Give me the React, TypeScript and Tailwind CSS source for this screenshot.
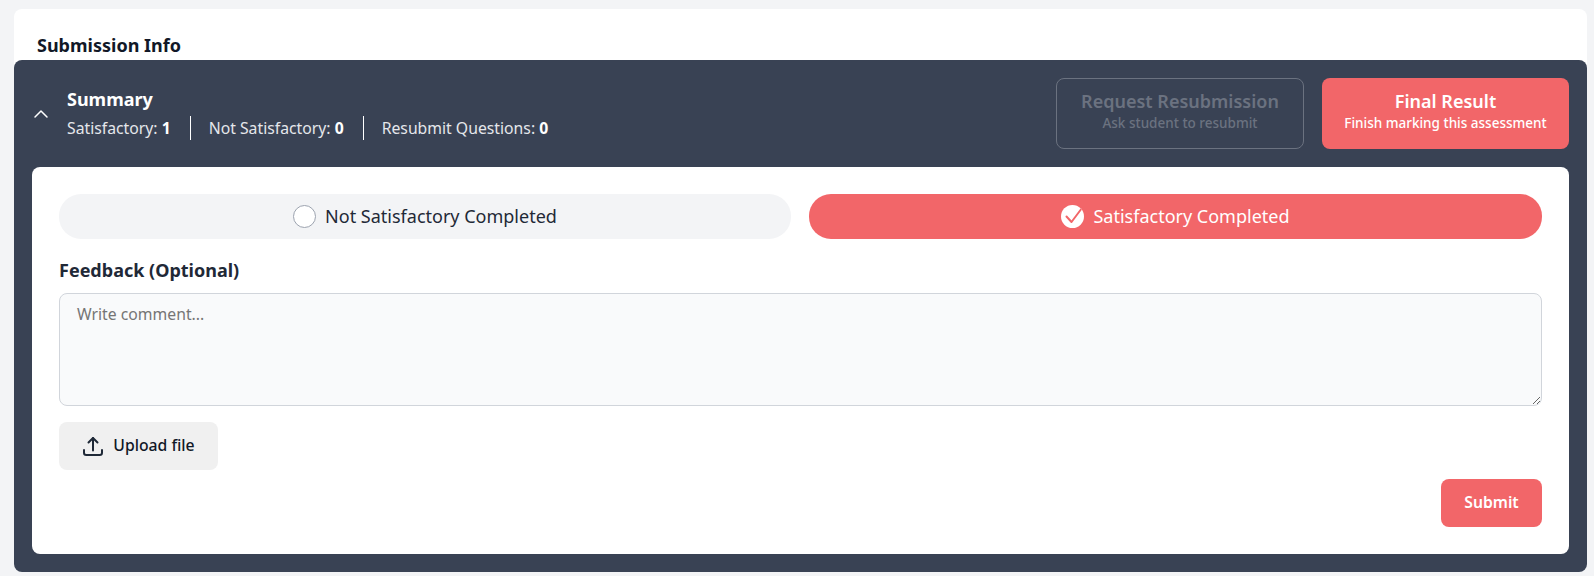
import { ChevronUp } from 'lucide-react'

const stats = [
  { label: 'Satisfactory', value: 1 },
  { label: 'Not Satisfactory', value: 0 },
  { label: 'Resubmit Questions', value: 0 },
]

function UploadIcon() {
  return (
    <svg width="22" height="22" viewBox="0 0 22 22" fill="none" stroke="#1f2937" strokeWidth="2" strokeLinecap="round" strokeLinejoin="round">
      <path d="M2 15v2.700a2.300 2.300 0 0 0 2.300 2.300h13.400a2.300 2.300 0 0 0 2.300-2.300V15" />
      <path d="M11 15.500V3" />
      <path d="M6.500 7.500 11 3l4.500 4.500" />
    </svg>
  )
}

export default function App() {
  return (
    <div className="h-[576px] overflow-hidden bg-[#f3f4f6] pt-[9px] pl-[14px] pr-[7px] font-['Noto_Sans',sans-serif]">
      {/* Submission info card */}
      <div className="h-[60px] rounded-t-lg bg-white pl-[23px] pt-[23px]">
        <h2 className="text-[18px] leading-[26px] font-bold text-[#111827]">Submission Info</h2>
      </div>

      {/* Summary panel */}
      <div className="relative mt-[-9px] h-[512px] rounded-lg bg-[#394254] px-[18px] pt-[18px]">
        <div className="flex h-[71px] items-center justify-between">
          <div className="flex items-center">
            <ChevronUp className="ml-[-3px] h-[24px] w-[24px] text-white" strokeWidth={1.5} />
            <div className="ml-[14px] mt-[-1px]">
              <div className="text-[18px] leading-[24px] font-bold text-white">Summary</div>
              <div className="mt-[5px] flex items-center text-[15.75px] leading-[24px] text-[#e5e7eb]">
                {stats.map((s, i) => (
                  <div key={s.label} className={i < 2 ? 'mr-[18px] border-r border-white pr-[19px]' : ''}>
                    {s.label}: <b className="font-bold text-white">{s.value}</b>
                  </div>
                ))}
              </div>
            </div>
          </div>
          <div className="flex gap-[18px]">
            <button disabled className="h-[71px] w-[248px] rounded-lg border border-[#6b7280] pb-[6px] text-center text-[#6b7280]">
              <div className="text-[18px] leading-[24px] font-semibold">Request Resubmission</div>
              <div className="text-[13.5px] leading-[20px] font-medium">Ask student to resubmit</div>
            </button>
            <button className="h-[71px] w-[247px] rounded-lg bg-[#f26669] pb-[6px] text-center text-white">
              <div className="text-[18px] leading-[24px] font-semibold">Final Result</div>
              <div className="text-[13.5px] leading-[20px] font-medium">Finish marking this assessment</div>
            </button>
          </div>
        </div>

        <div className="mt-[18px] h-[387px] rounded-lg bg-white px-[27px] pt-[27px]">
          <div className="grid grid-cols-[732px_1fr] gap-[18px]">
            <button className="flex h-[45px] items-center justify-center gap-[9px] rounded-[22px] bg-[#f3f4f6] text-[18px] text-[#1f2937]">
              <span className="h-[23px] w-[23px] rounded-full border border-[#9ca3af] bg-white" />
              Not Satisfactory Completed
            </button>
            <button className="flex h-[45px] items-center justify-center gap-[9px] rounded-[22px] bg-[#f26669] text-[18px] text-white">
              <span className="h-[23px] w-[23px] overflow-hidden rounded-full bg-white">
                <svg width="23" height="23" viewBox="0 0 23 23" fill="none" stroke="#f26669" strokeWidth="2" strokeLinecap="round" strokeLinejoin="round">
                  <path d="M5.500 11.500 10.500 17 21 3" />
                </svg>
              </span>
              Satisfactory Completed
            </button>
          </div>

          <label className="mt-[18px] block text-[18px] leading-[27px] font-bold text-[#1f2937]">Feedback (Optional)</label>
          <textarea
            placeholder="Write comment..."
            className="mt-[9px] block h-[113px] w-full rounded-lg border border-[#d1d5db] bg-[#f9fafb] px-[17px] py-[9px] text-[15.75px] leading-[22px] placeholder:text-[#757575]"
          />

          <button className="mt-[16px] flex h-[48px] w-[159px] items-center justify-center gap-[9px] rounded-lg bg-[#f0f0f0] text-[15.75px] font-medium text-[#111827]">
            <UploadIcon />
            Upload file
          </button>

          <div className="mt-[9px] flex justify-end">
            <button className="h-[48px] w-[101px] rounded-lg bg-[#f26669] text-[15.75px] font-semibold text-white">Submit</button>
          </div>
        </div>
      </div>
    </div>
  )
}
